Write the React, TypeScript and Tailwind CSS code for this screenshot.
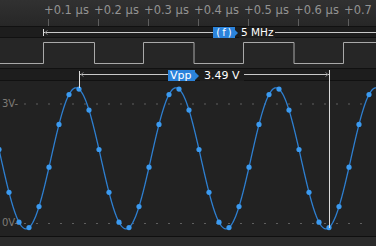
import React from "react";

const TICKS = ["+0.1 µs", "+0.2 µs", "+0.3 µs", "+0.4 µs", "+0.5 µs", "+0.6 µs", "+0.7 µs"];

// sine fitted to the capture: centre, amplitude, phase (px), period (px)
const CHART_TOP = 81;
const MID = 158.35 - CHART_TOP;
const AMP = 70.5;
const PEAK_X = 76;
const PERIOD = 100;

const sineY = (x: number) => MID - AMP * Math.cos((2 * Math.PI * (x - PEAK_X)) / PERIOD);

function sinePath() {
  const pts: string[] = [];
  for (let x = -4; x <= 380; x += 0.5) {
    pts.push(`${pts.length ? "L" : "M"}${x.toFixed(1)},${sineY(x).toFixed(2)}`);
  }
  return pts.join(" ");
}

const SAMPLES = Array.from({ length: 40 }, (_, i) => -1 + i * 10);

// digital edges
const EDGES = [43.5, 94.5, 143.5, 194, 243.5, 294, 343.5];

function digitalPath() {
  const hi = 4.5;
  const lo = 25.5;
  let d = `M-2,${lo}`;
  EDGES.forEach((x, i) => {
    const from = i % 2 === 0 ? lo : hi;
    const to = i % 2 === 0 ? hi : lo;
    d += ` L${x},${from} L${x},${to}`;
  });
  d += ` L380,${EDGES.length % 2 === 0 ? lo : hi}`;
  return d;
}

const DASHES = Array.from({ length: 31 }, (_, i) => i * 12);

export default function App() {
  return (
    <div className="relative w-[376px] h-[246px] overflow-hidden bg-[#222222] font-['DejaVu_Sans',sans-serif]">
      <div className="flex flex-col h-full">
        {/* Time ruler */}
        <div className="h-[26px] shrink-0 flex pl-[48px] bg-gradient-to-b from-[#313131] to-[#272727] overflow-hidden">
          {TICKS.map((t) => (
            <div key={t} className="w-[50px] shrink-0 flex flex-col justify-between">
              <span className="-ml-[4px] pt-[3px] text-[11.5px] leading-[14px] text-[#939393] whitespace-nowrap">{t}</span>
              <div className="w-px h-[7px] bg-[#5e5e5e]" />
            </div>
          ))}
        </div>
        <div className="h-px shrink-0 bg-[#111111]" />

        {/* Frequency measurement */}
        <div className="relative h-[10px] shrink-0 bg-[#1d1d1d]">
          <div className="absolute left-[213px] top-0 h-[11px] flex items-center z-10">
            <span className="h-full w-[22px] flex items-center justify-center gap-[2px] bg-[#2b83db] text-white text-[10px] leading-none">
              <span>(</span>
              <span>f</span>
              <span>)</span>
            </span>
            <span className="w-0 h-0 border-y-[3px] border-y-transparent border-l-[3px] border-l-[#2b83db]" />
            <span className="ml-[1px] px-[2px] h-[10px] flex items-center bg-[#1d1d1d] text-white text-[10.5px] leading-none">5 MHz</span>
          </div>
        </div>
        <div className="h-px shrink-0 bg-[#111111]" />

        {/* Digital signal */}
        <div className="h-[30px] shrink-0 bg-[#262626]">
          <svg width="376" height="30" className="block">
            <path d={digitalPath()} fill="none" stroke="#a9a9a9" strokeWidth="1" />
          </svg>
        </div>
        <div className="h-px shrink-0 bg-[#111111]" />

        {/* Vpp measurement */}
        <div className="relative h-[11px] shrink-0 bg-[#1d1d1d]">
          <div className="absolute left-[168px] top-[1px] h-[11px] flex items-center z-10">
            <span className="h-full w-[27px] pl-[2px] flex items-center bg-[#2b83db] text-white text-[11px] leading-none">Vpp</span>
            <span className="w-0 h-0 border-y-[4px] border-y-transparent border-l-[4px] border-l-[#2b83db]" />
            <span className="ml-[1px] px-[4px] h-[10px] flex items-center bg-[#1d1d1d] text-white text-[11px] leading-none">3.49 V</span>
          </div>
        </div>
        <div className="h-px shrink-0 bg-[#111111]" />

        {/* Analog chart */}
        <div className="relative h-[155px] shrink-0 bg-[#222222]">
          <span className="absolute left-[2px] top-[18px] text-[10px] leading-none text-[#7e7b76]">3V-</span>
          <span className="absolute left-[2px] top-[137px] text-[10px] leading-none text-[#7e7b76]">0V-</span>
          <svg width="376" height="155" className="block">
            {DASHES.filter((x) => x > 14).map((x) => (
              <g key={x}>
                <rect x={x} y={22.5} width="2" height="1" fill="#5f5f5f" />
                <rect x={x} y={142} width="2" height="1" fill="#5f5f5f" />
              </g>
            ))}
            <path d={sinePath()} fill="none" stroke="#2e7fd0" strokeWidth="1.3" />
            {SAMPLES.map((x) => (
              <circle key={x} cx={x} cy={sineY(x)} r="2.6" fill="#3b9af0" />
            ))}
          </svg>
        </div>
        <div className="h-px shrink-0 bg-[#0f0f0f]" />
        <div className="flex-1 bg-[#2b2b2b]" />
      </div>

      {/* measurement cursors */}
      <svg width="376" height="246" className="absolute inset-0 pointer-events-none">
        <line x1="44" y1="32.5" x2="213" y2="32.5" stroke="#c9c9c9" strokeWidth="1" />
        <line x1="274" y1="32.5" x2="376" y2="32.5" stroke="#c9c9c9" strokeWidth="1" />
        <line x1="43.5" y1="29" x2="43.5" y2="36" stroke="#d8d8d8" strokeWidth="1" />
        <path d="M47.5,30.5 L45,32.5 L47.5,34.5" fill="none" stroke="#8a8a8a" strokeWidth="1" />

        <line x1="80" y1="74.5" x2="168" y2="74.5" stroke="#c9c9c9" strokeWidth="1" />
        <line x1="242" y1="74.5" x2="329" y2="74.5" stroke="#c9c9c9" strokeWidth="1" />
        <line x1="79.5" y1="71" x2="79.5" y2="88" stroke="#dcdcdc" strokeWidth="1" />
        <line x1="329.5" y1="70" x2="329.5" y2="228" stroke="#dcdcdc" strokeWidth="1" />
        <path d="M83.5,72.5 L81,74.5 L83.5,76.5" fill="none" stroke="#8a8a8a" strokeWidth="1" />
        <path d="M325.5,72.5 L328,74.5 L325.5,76.5" fill="none" stroke="#8a8a8a" strokeWidth="1" />
      </svg>
    </div>
  );
}
